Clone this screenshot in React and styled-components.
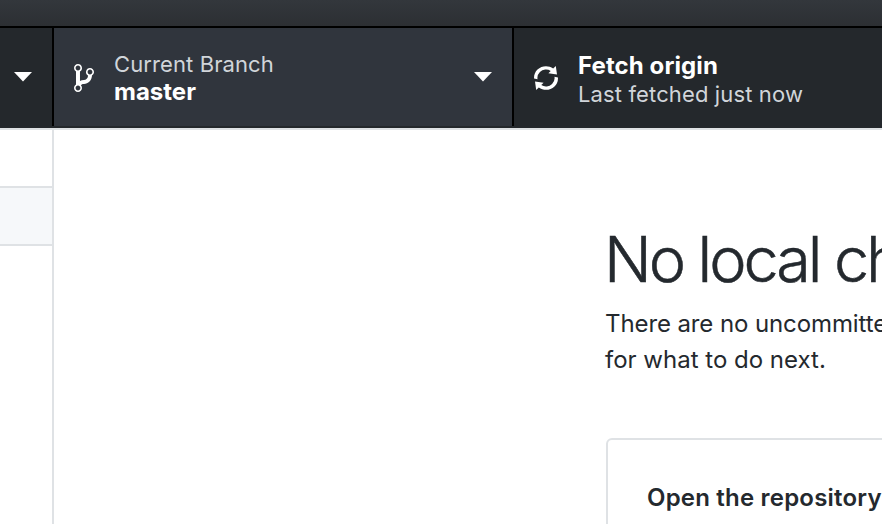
import React from 'react';
import styled, { createGlobalStyle } from 'styled-components';

const GlobalStyle = createGlobalStyle`
  * { box-sizing: border-box; }
  body {
    margin: 0;
    overflow: hidden;
    background: #fff;
    color: #24292e;
    font-family: Inter, "Liberation Sans", sans-serif;
    -webkit-font-smoothing: antialiased;
  }
`;

const Window = styled.div`
  display: flex;
  flex-direction: column;
  width: 882px;
  height: 524px;
  overflow: hidden;
`;

const TitleBar = styled.header`
  flex: 0 0 28px;
  background: linear-gradient(#33373c, #2c2f33);
  border-bottom: 2px solid #000;
`;

const Toolbar = styled.nav`
  display: flex;
  flex: 0 0 102px;
  background: #24282c;
  border-bottom: 2px solid #dfe2e5;
  padding-bottom: 2px;
`;

const ToolbarButton = styled.div`
  display: flex;
  align-items: center;
  flex: ${(p) => (p.$width ? `0 0 ${p.$width}px` : '1')};
  padding: 0 20px;
  background: ${(p) => (p.$open ? '#30353d' : '#24282c')};
  border-right: ${(p) => (p.$width ? '2px solid #000' : 'none')};
`;

const RepositoryButton = styled(ToolbarButton)`
  padding: 0 20px 0 14px;
`;

const Icon = styled.svg`
  display: block;
  flex: none;
  fill: #fff;
  margin-top: ${(p) => p.$drop || 0}px;
`;

const Labels = styled.div`
  flex: 1;
  margin-left: 20px;
  padding-top: ${(p) => p.$drop}px;
  white-space: nowrap;
`;

const Caption = styled.div`
  color: #d1d5da;
  font-size: 22px;
  line-height: 28px;
  letter-spacing: ${(p) => p.$tracking}px;
`;

const Title = styled.div`
  color: #fff;
  font-size: 24px;
  font-weight: 650;
  line-height: 28px;
  letter-spacing: ${(p) => p.$tracking}px;
`;

const Body = styled.div`
  display: flex;
  flex: 1;
  min-height: 0;
`;

const Sidebar = styled.aside`
  flex: 0 0 54px;
  border-right: 2px solid #dfe2e5;
`;

const TabStrip = styled.div`
  height: 58px;
  border-bottom: 2px solid #dfe2e5;
`;

const FilesHeader = styled.div`
  height: 58px;
  background: #f6f8fa;
  border-bottom: 2px solid #dfe2e5;
`;

const Main = styled.main`
  flex: 1;
  min-width: 0;
  padding: 93px 0 0 552px;
  white-space: nowrap;
  overflow: hidden;
`;

const Heading = styled.h1`
  margin: 0 0 0 -2px;
  font-size: 63px;
  font-weight: 300;
  -webkit-text-stroke: 0.5px #24292e;
  line-height: 72px;
  letter-spacing: -3.1px;
`;

const Paragraph = styled.p`
  margin: 11px 0 60px -1px;
  font-size: 24px;
  line-height: 36px;
`;

const Line = styled.span`
  display: block;
  letter-spacing: ${(p) => p.$tracking}px;
`;

const Card = styled.section`
  width: 1000px;
  height: 200px;
  padding: 42px 39px;
  border: 2px solid #dfe2e5;
  border-radius: 6px;
`;

const CardTitle = styled.h2`
  margin: 0;
  font-size: 24px;
  font-weight: 600;
  line-height: 32px;
  letter-spacing: 0.2px;
`;

const Caret = () => (
  <Icon width="18" height="10" viewBox="0 0 18 10">
    <path d="M0 0h18L9 9.5z" />
  </Icon>
);

const BranchIcon = () => (
  <Icon width="20" height="32" viewBox="0 0 10 16" $drop={2}>
    <path d="M10 5c0-1.11-.89-2-2-2a1.993 1.993 0 0 0-1 3.72v.3c-.02.52-.23.98-.63 1.38-.4.4-.86.61-1.38.63-.83.02-1.48.16-2 .45V4.72a1.993 1.993 0 0 0-1-3.72C.88 1 0 1.89 0 3a2 2 0 0 0 1 1.72v6.56c-.59.35-1 .99-1 1.72 0 1.11.89 2 2 2 1.11 0 2-.89 2-2 0-.53-.2-1-.53-1.36.09-.06.48-.41.59-.47.25-.11.56-.17.94-.17 1.05-.05 1.95-.45 2.75-1.25S8.95 7.77 9 6.73h-.02C9.59 6.37 10 5.73 10 5zM2 1.8c.66 0 1.2.55 1.2 1.2 0 .65-.55 1.2-1.2 1.2C1.35 4.2.8 3.65.8 3c0-.65.55-1.2 1.2-1.2zm0 12.41c-.66 0-1.2-.55-1.2-1.2 0-.65.55-1.2 1.2-1.2.65 0 1.2.55 1.2 1.2 0 .65-.55 1.2-1.2 1.2zm6-8c-.66 0-1.2-.55-1.2-1.2 0-.65.55-1.2 1.2-1.2.65 0 1.2.55 1.2 1.2 0 .65-.55 1.2-1.2 1.2z" />
  </Icon>
);

const SyncIcon = () => (
  <Icon width="24" height="32" viewBox="0 0 12 16" $drop={2}>
    <path d="M10.24 7.4a4.15 4.15 0 0 1-1.2 3.6 4.346 4.346 0 0 1-5.41.54L4.8 10.4.5 9.8l.6 4.2 1.31-1.26c2.36 1.74 5.7 1.57 7.84-.54a5.876 5.876 0 0 0 1.74-4.46l-1.75-.34zM2.96 5a4.346 4.346 0 0 1 5.41-.54L7.2 5.6l4.3.6-.6-4.2-1.31 1.26c-2.36-1.74-5.7-1.57-7.85.54C.5 5.03-.06 6.65.01 8.26l1.75.35A4.17 4.17 0 0 1 2.96 5z" />
  </Icon>
);

export default function App() {
  return (
    <>
      <GlobalStyle />
      <Window>
        <TitleBar />
        <Toolbar>
          <RepositoryButton $width={54}>
            <Caret />
          </RepositoryButton>
          <ToolbarButton $width={460} $open>
            <BranchIcon />
            <Labels $drop={2}>
              <Caption $tracking={0.1}>Current Branch</Caption>
              <Title $tracking={0}>master</Title>
            </Labels>
            <Caret />
          </ToolbarButton>
          <ToolbarButton>
            <SyncIcon />
            <Labels $drop={6}>
              <Title $tracking={0.1}>Fetch origin</Title>
              <Caption $tracking={0.13}>Last fetched just now</Caption>
            </Labels>
          </ToolbarButton>
        </Toolbar>
        <Body>
          <Sidebar>
            <TabStrip />
            <FilesHeader />
          </Sidebar>
          <Main>
            <Heading>No local changes</Heading>
            <Paragraph>
              <Line $tracking={-0.1}>There are no uncommitted changes</Line>
              <Line $tracking={0}>for what to do next.</Line>
            </Paragraph>
            <Card>
              <CardTitle>Open the repository</CardTitle>
            </Card>
          </Main>
        </Body>
      </Window>
    </>
  );
}
